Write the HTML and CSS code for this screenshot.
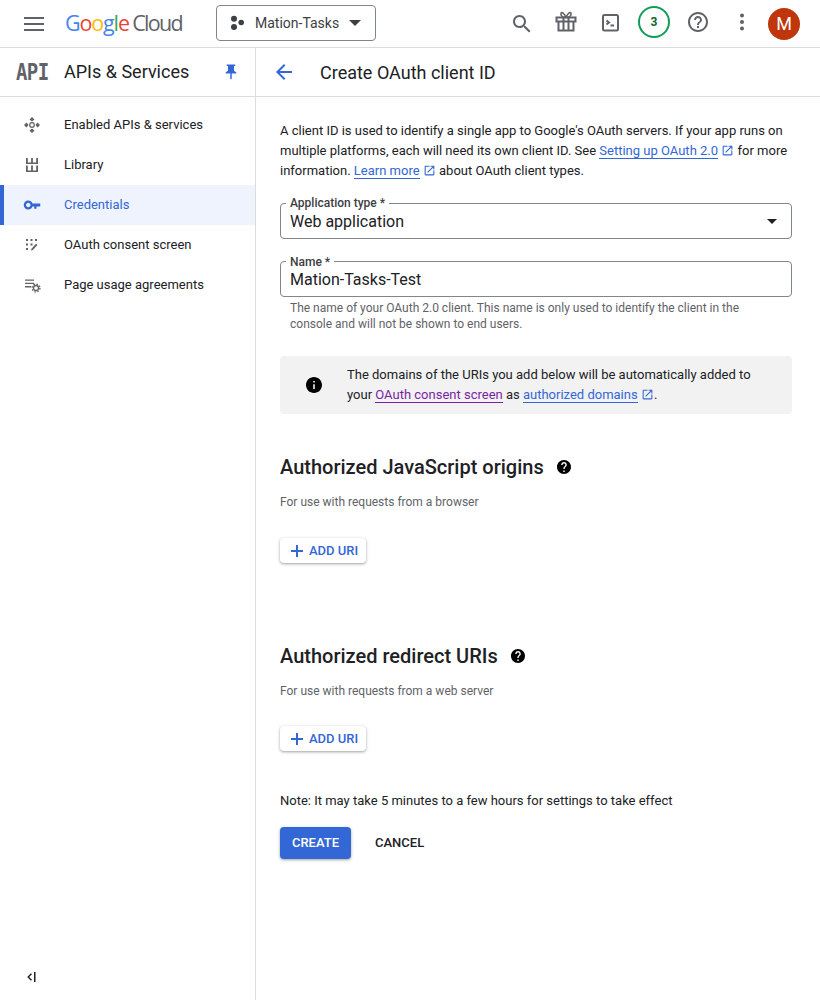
FILE: index.html
```html
<!DOCTYPE html>
<html lang="en">
<head>
<meta charset="utf-8">
<title>Create OAuth client ID</title>
<link rel="stylesheet" href="styles.css">
</head>
<body>
<header class="topbar">
  <svg class="menu-icon" width="20" height="14" viewBox="0 0 20 14"><path fill="#5f6368" d="M0 0h20v2H0zM0 6h20v2H0zM0 12h20v2H0z"/></svg>
  <div class="logo"><span class="lb">G</span><span class="lr">o</span><span class="ly">o</span><span class="lb">g</span><span class="lg">l</span><span class="lr">e</span> <span class="lc">Cloud</span></div>
  <div class="project">
    <svg width="16" height="16" viewBox="0 0 16 16"><circle cx="5" cy="3.7" r="3" fill="#3c4043"/><circle cx="12.2" cy="7.5" r="2.8" fill="#3c4043"/><circle cx="5" cy="12" r="3" fill="#3c4043"/></svg>
    <span class="project-name">Mation-Tasks</span>
    <span class="caret"></span>
  </div>
  <div class="top-actions">
    <span class="top-btn"><svg width="24" height="24" viewBox="0 0 24 24"><path fill="#5f6368" d="M15.5 14h-.79l-.28-.27C15.41 12.59 16 11.11 16 9.5 16 5.91 13.09 3 9.5 3S3 5.91 3 9.5 5.91 16 9.5 16c1.61 0 3.09-.59 4.23-1.57l.27.28v.79l5 4.99L20.49 19l-4.99-5zm-6 0C7.01 14 5 11.99 5 9.5S7.01 5 9.5 5 14 7.01 14 9.5 11.99 14 9.5 14z"/></svg></span>
    <span class="top-btn up2"><svg width="24" height="24" viewBox="0 0 24 24" fill="none" stroke="#5f6368" stroke-width="2"><path d="M2.500 7.500h19v4h-19zM4.500 11.500V20.500h15v-9M9.500 7.500V20.500M14.500 7.500V20.500"/><path stroke-width="1.600" d="M12 7.500C10.500 3 7.500 1.500 7 3.500S8.500 7.500 12 7.500zM12 7.500C13.500 3 16.500 1.500 17 3.500S15.500 7.500 12 7.500z"/></svg></span>
    <span class="top-btn up1"><svg width="24" height="24" viewBox="0 0 24 24" fill="none" stroke="#5f6368" stroke-width="2"><rect x="5" y="4" width="15" height="15.500" rx="1.500"/><path d="M8.500 9.500l2.500 2-2.500 2"/><path d="M12.500 14.500h3.500"/></svg></span>
    <span class="top-btn up2"><span class="badge">3</span></span>
    <span class="top-btn up2"><svg width="24" height="24" viewBox="0 0 24 24"><path fill="#5f6368" d="M11 18h2v-2h-2v2zm1-16C6.48 2 2 6.48 2 12s4.48 10 10 10 10-4.48 10-10S17.52 2 12 2zm0 18c-4.41 0-8-3.59-8-8s3.59-8 8-8 8 3.590 8 8-3.590 8-8 8zm0-14c-2.210 0-4 1.790-4 4h2c0-1.100.9-2 2-2s2 .9 2 2c0 2-3 1.750-3 5h2c0-2.250 3-2.500 3-5 0-2.210-1.790-4-4-4z"/></svg></span>
    <span class="top-btn up2"><svg width="24" height="24" viewBox="0 0 24 24"><circle cx="12" cy="5.500" r="2" fill="#5f6368"/><circle cx="12" cy="12" r="2" fill="#5f6368"/><circle cx="12" cy="18.500" r="2" fill="#5f6368"/></svg></span>
    <span class="avatar">M</span>
  </div>
</header>
<div class="shell">
  <aside class="sidebar">
    <div class="side-head">
      <span class="api-logo">API</span>
      <span class="side-title">APIs &amp; Services</span>
      <svg class="pin" width="18" height="18" viewBox="0 0 24 24"><path fill="#3367d6" d="M16 9V4h1c.55 0 1-.45 1-1s-.45-1-1-1H7c-.55 0-1 .45-1 1s.45 1 1 1h1v5c0 1.660-1.340 3-3 3v2h5.970v7l1 1 1-1v-7H19v-2c-1.660 0-3-1.340-3-3z"/></svg>
    </div>
    <nav class="side-nav">
      <a class="nav-item">
        <svg width="18" height="18" viewBox="0 0 18 18" fill="#5f6368"><path d="M9 1l2.500 2.500L9 5.500 6.500 3.500zM9 12.500l2.500 2-2.500 2.500-2.500-2.500zM1 9l2.500-2.500L5.500 9l-2 2.500zM12.500 9l2-2.500L17 9l-2.500 2.500z"/><circle cx="9" cy="9" r="2.300" fill="none" stroke="#5f6368" stroke-width="1.200"/></svg>
        <span>Enabled APIs &amp; services</span>
      </a>
      <a class="nav-item">
        <svg width="18" height="18" viewBox="0 0 18 18" fill="#5f6368"><path d="M3 2h1.800v4.500H3zM8.100 2h1.800v4.500H8.100zM13.200 2H15v4.500h-1.800zM3 6.500h12v1.400H3zM3 9.500h1.800v5H3zM8.100 9.500h1.800v5H8.100zM13.200 9.500H15v5h-1.800zM3 14.500h12V16H3z"/></svg>
        <span>Library</span>
      </a>
      <a class="nav-item active">
        <svg width="18" height="18" viewBox="0 0 24 24"><path fill="#3367d6" d="M12.650 10C11.830 7.670 9.610 6 7 6c-3.310 0-6 2.690-6 6s2.690 6 6 6c2.610 0 4.830-1.670 5.650-4H15v3h3v-3h5v-4H12.650zM7 15c-1.650 0-3-1.350-3-3s1.350-3 3-3 3 1.350 3 3-1.350 3-3 3z"/></svg>
        <span>Credentials</span>
      </a>
      <a class="nav-item">
        <svg width="18" height="18" viewBox="0 0 18 18" fill="#5f6368"><path d="M3 3h2v2H3zM7.500 3h2v2h-2zM12 3h2v2h-2zM3 7.500h2v2H3zM7.500 7.500h2v2h-2zM3 12h2v2H3z"/><path d="M8 14.500l.5-1.700 4.500-5 1.400 1.200-4.600 5z"/></svg>
        <span>OAuth consent screen</span>
      </a>
      <a class="nav-item">
        <svg width="18" height="18" viewBox="0 0 18 18" fill="#5f6368"><path d="M2 3.500h9v1.300H2zM2 6.800h9v1.300H2zM2 10.100h6v1.300H2z"/><circle cx="13" cy="12" r="2.500" fill="none" stroke="#5f6368" stroke-width="1.300"/><circle cx="13" cy="12" r="3.900" fill="none" stroke="#5f6368" stroke-width="1.400" stroke-dasharray="1.530 1.530"/></svg>
        <span>Page usage agreements</span>
      </a>
    </nav>
    <div class="side-foot">
      <svg width="12" height="12" viewBox="0 0 12 12"><path fill="#202124" d="M10 1h1.500v10H10zM8 3.200L7 2.200 3.200 6 7 9.800l1-1L5.200 6z"/></svg>
    </div>
  </aside>
  <main class="content">
    <div class="page-head">
      <svg width="24" height="24" viewBox="0 0 24 24"><path fill="#3367d6" d="M20 11H7.830l5.590-5.590L12 4l-8 8 8 8 1.410-1.410L7.830 13H20v-2z"/></svg>
      <h1>Create OAuth client ID</h1>
    </div>
    <div class="form">
      <p class="intro">A client ID is used to identify a single app to Google's OAuth servers. If your app runs on multiple platforms, each will need its own client ID. See <a class="link">Setting up OAuth 2.0</a> <svg class="ext" width="13" height="13" viewBox="0 0 24 24"><path fill="#3367d6" d="M19 19H5V5h7V3H5c-1.110 0-2 .9-2 2v14c0 1.100.89 2 2 2h14c1.100 0 2-.9 2-2v-7h-2v7zM14 3v2h3.590l-9.830 9.830 1.410 1.410L19 6.410V10h2V3h-7z"/></svg> for more information. <a class="link">Learn more</a> <svg class="ext" width="13" height="13" viewBox="0 0 24 24"><path fill="#3367d6" d="M19 19H5V5h7V3H5c-1.110 0-2 .9-2 2v14c0 1.100.89 2 2 2h14c1.100 0 2-.9 2-2v-7h-2v7zM14 3v2h3.590l-9.830 9.830 1.410 1.410L19 6.410V10h2V3h-7z"/></svg> about OAuth client types.</p>
      <div class="field select">
        <label>Application type *</label>
        <span class="value">Web application</span>
        <span class="arrow"></span>
      </div>
      <div class="field name">
        <label>Name *</label>
        <span class="value">Mation-Tasks-Test</span>
      </div>
      <p class="hint">The name of your OAuth 2.0 client. This name is only used to identify the client in the console and will not be shown to end users.</p>
      <div class="callout">
        <svg width="16" height="16" viewBox="2 2 20 20"><path fill="#000" d="M12 2C6.480 2 2 6.480 2 12s4.480 10 10 10 10-4.480 10-10S17.520 2 12 2zm1 15h-2v-6h2v6zm0-8h-2V7h2v2z"/></svg>
        <p>The domains of the URIs you add below will be automatically added to your <a class="link visited">OAuth consent screen</a> as <a class="link">authorized domains</a> <svg class="ext" width="13" height="13" viewBox="0 0 24 24"><path fill="#3367d6" d="M19 19H5V5h7V3H5c-1.110 0-2 .9-2 2v14c0 1.100.89 2 2 2h14c1.100 0 2-.9 2-2v-7h-2v7zM14 3v2h3.590l-9.830 9.830 1.410 1.410L19 6.410V10h2V3h-7z"/></svg>.</p>
      </div>
      <section class="uri-section first">
        <h2>Authorized JavaScript origins <svg width="14" height="14" viewBox="2 2 20 20"><path fill="#000" d="M12 2C6.480 2 2 6.480 2 12s4.480 10 10 10 10-4.480 10-10S17.520 2 12 2zm1 17h-2v-2h2v2zm2.070-7.750l-.9.920C13.450 12.900 13 13.500 13 15h-2v-.5c0-1.100.45-2.100 1.170-2.830l1.240-1.260c.37-.36.59-.86.59-1.410 0-1.100-.9-2-2-2s-2 .9-2 2H8c0-2.210 1.790-4 4-4s4 1.790 4 4c0 .88-.36 1.680-.93 2.250z"/></svg></h2>
        <p class="sub">For use with requests from a browser</p>
        <button class="add-btn"><svg width="14" height="14" viewBox="0 0 14 14"><path fill="#3367d6" d="M6 1h2v5h5v2H8v5H6V8H1V6h5z"/></svg>ADD URI</button>
      </section>
      <section class="uri-section second">
        <h2>Authorized redirect URIs <svg width="14" height="14" viewBox="2 2 20 20"><path fill="#000" d="M12 2C6.480 2 2 6.480 2 12s4.480 10 10 10 10-4.480 10-10S17.520 2 12 2zm1 17h-2v-2h2v2zm2.070-7.750l-.9.920C13.450 12.900 13 13.500 13 15h-2v-.5c0-1.100.45-2.100 1.170-2.830l1.240-1.260c.37-.36.59-.86.59-1.410 0-1.100-.9-2-2-2s-2 .9-2 2H8c0-2.210 1.790-4 4-4s4 1.790 4 4c0 .88-.36 1.680-.93 2.250z"/></svg></h2>
        <p class="sub">For use with requests from a web server</p>
        <button class="add-btn"><svg width="14" height="14" viewBox="0 0 14 14"><path fill="#3367d6" d="M6 1h2v5h5v2H8v5H6V8H1V6h5z"/></svg>ADD URI</button>
      </section>
      <p class="note">Note: It may take 5 minutes to a few hours for settings to take effect</p>
      <div class="actions">
        <button class="primary">CREATE</button>
        <button class="secondary">CANCEL</button>
      </div>
    </div>
  </main>
</div>
</body>
</html>
```
FILE: styles.css
```css
* { box-sizing: border-box; }
html, body { margin: 0; height: 100%; overflow: hidden; }
body { font-family: Roboto, "Liberation Sans", sans-serif; color: #202124; background: #fff; display: flex; flex-direction: column; font-size: 13px; }
p, h1, h2 { margin: 0; }
svg { display: block; flex: none; }

.topbar { height: 48px; flex: none; display: flex; align-items: center; border-bottom: 1px solid #dadce0; padding-left: 24px; padding-right: 20px; }
.menu-icon { margin-right: 21px; }
.logo { font-family: "Open Sans", sans-serif; font-size: 21.5px; letter-spacing: -1.15px; width: 151px; white-space: nowrap; margin-top: -2px; }
.lb { color: #4285f4; } .lr { color: #ea4335; } .ly { color: #fbbc04; } .lg { color: #34a853; }
.lc { color: #5f6368; letter-spacing: -1.7px; margin-left: -1px; }
.project { width: 160px; height: 36px; border: 1px solid #80868b; border-radius: 4px; display: flex; align-items: center; padding: 0 14px 0 12px; gap: 10px; margin-top: -1px; }
.project-name { font-size: 14px; color: #3c4043; flex: 1; white-space: nowrap; }
.caret { width: 0; height: 0; border-left: 6px solid transparent; border-right: 6px solid transparent; border-top: 6px solid #3c4043; }
.top-actions { margin-left: auto; display: flex; align-items: center; }
.top-btn { width: 44px; height: 40px; display: flex; align-items: center; justify-content: center; }
.up1 { margin-top: -2px; }
.up2 { margin-top: -4px; }
.badge { width: 32px; height: 32px; border: 2px solid #0f9d58; border-radius: 50%; display: flex; align-items: center; justify-content: center; font-size: 12px; font-weight: 700; color: #0d652d; }
.avatar { width: 32px; height: 32px; border-radius: 50%; background: #bf360c; color: #fff; display: flex; align-items: center; justify-content: center; font-size: 18px; margin-left: 4px; }

.shell { flex: 1; display: flex; min-height: 0; }
.sidebar { width: 256px; flex: none; border-right: 1px solid #dadce0; display: flex; flex-direction: column; }
.side-head { height: 49px; display: flex; align-items: center; border-bottom: 1px solid #dadce0; padding-left: 16px; padding-right: 15px; padding-bottom: 2px; }
.api-logo { font-family: "DejaVu Sans Mono", monospace; font-weight: 700; font-size: 19px; color: #5f6368; width: 48px; letter-spacing: -0.6px; transform: scaleY(1.2); margin-top: 2px; }
.side-title { font-size: 18px; flex: 1; }
.pin { margin-top: 2px; }
.side-nav { padding-top: 8px; display: flex; flex-direction: column; }
.nav-item { height: 40px; display: flex; align-items: center; padding-left: 23px; gap: 23px; border-left: 0 solid #3367d6; }
.nav-item span { margin-bottom: 2px; }
.nav-item.active { background: #eef3fd; color: #3367d6; border-left-width: 4px; padding-left: 19px; }
.side-foot { margin-top: auto; padding: 0 0 17px 24px; }

.content { flex: 1; min-width: 0; }
.page-head { height: 49px; display: flex; align-items: center; border-bottom: 1px solid #dadce0; padding-left: 16px; gap: 24px; }
h1 { font-size: 18px; font-weight: 400; }
.form { padding: 24px 28px 0 24px; }
.intro { line-height: 20px; }
.link { color: #3367d6; border-bottom: 1px solid #3367d6; }
.link.visited { color: #7b1fa2; border-color: #7b1fa2; }
.ext { display: inline-block; vertical-align: -2px; }

.field { position: relative; height: 36px; border: 1px solid #80868b; border-radius: 4px; display: flex; align-items: center; padding-left: 9px; font-size: 16px; }
.field label { position: absolute; left: 5px; top: -8px; padding: 0 4px; background: #fff; font-size: 12px; line-height: 14px; font-weight: 500; color: #3c4043; }
.select { margin-top: 22px; }
.name { margin-top: 22px; }
.name label { top: -7px; }
.arrow { position: absolute; right: 14px; top: 15px; width: 0; height: 0; border-left: 5px solid transparent; border-right: 5px solid transparent; border-top: 5px solid #202124; }
.hint { margin: 3px 40px 0 10px; font-size: 12px; line-height: 16px; color: #5f6368; }

.callout { margin-top: 24px; height: 58px; background: #f2f2f2; border-radius: 4px; display: flex; align-items: center; padding-left: 26px; gap: 25px; }
.callout p { line-height: 20px; flex: 1; padding-right: 20px; }

.uri-section h2 { font-size: 20px; font-weight: 500; line-height: 24px; display: flex; align-items: center; gap: 13px; }
.first { padding-top: 41px; }
.second { padding-top: 81px; }
.sub { font-size: 12px; line-height: 16px; color: #5f6368; margin-top: 15px; }
.add-btn { margin-top: 28px; height: 25px; width: 86px; border: 0; border-radius: 4px; background: #fff; box-shadow: 0 1px 2px rgba(60,64,67,.3), 0 1px 3px 1px rgba(60,64,67,.15); color: #3367d6; font: 500 13px Roboto, sans-serif; display: flex; align-items: center; padding: 0 0 0 10px; gap: 5px; }
.second .add-btn { margin-top: 27px; }

.note { margin-top: 42px; line-height: 16px; font-size: 13px; }
.actions { margin-top: 18px; display: flex; align-items: center; gap: 12px; }
.primary { width: 71px; height: 32px; padding: 0 0 2px; border: 0; border-radius: 4px; background: #3367d6; color: #fff; font: 500 13px Roboto, sans-serif; box-shadow: 0 1px 2px rgba(60,64,67,.3), 0 1px 3px 1px rgba(60,64,67,.15); }
.secondary { height: 32px; padding: 0 12px 2px; border: 0; background: transparent; color: #202124; font: 500 13px Roboto, sans-serif; }
```
